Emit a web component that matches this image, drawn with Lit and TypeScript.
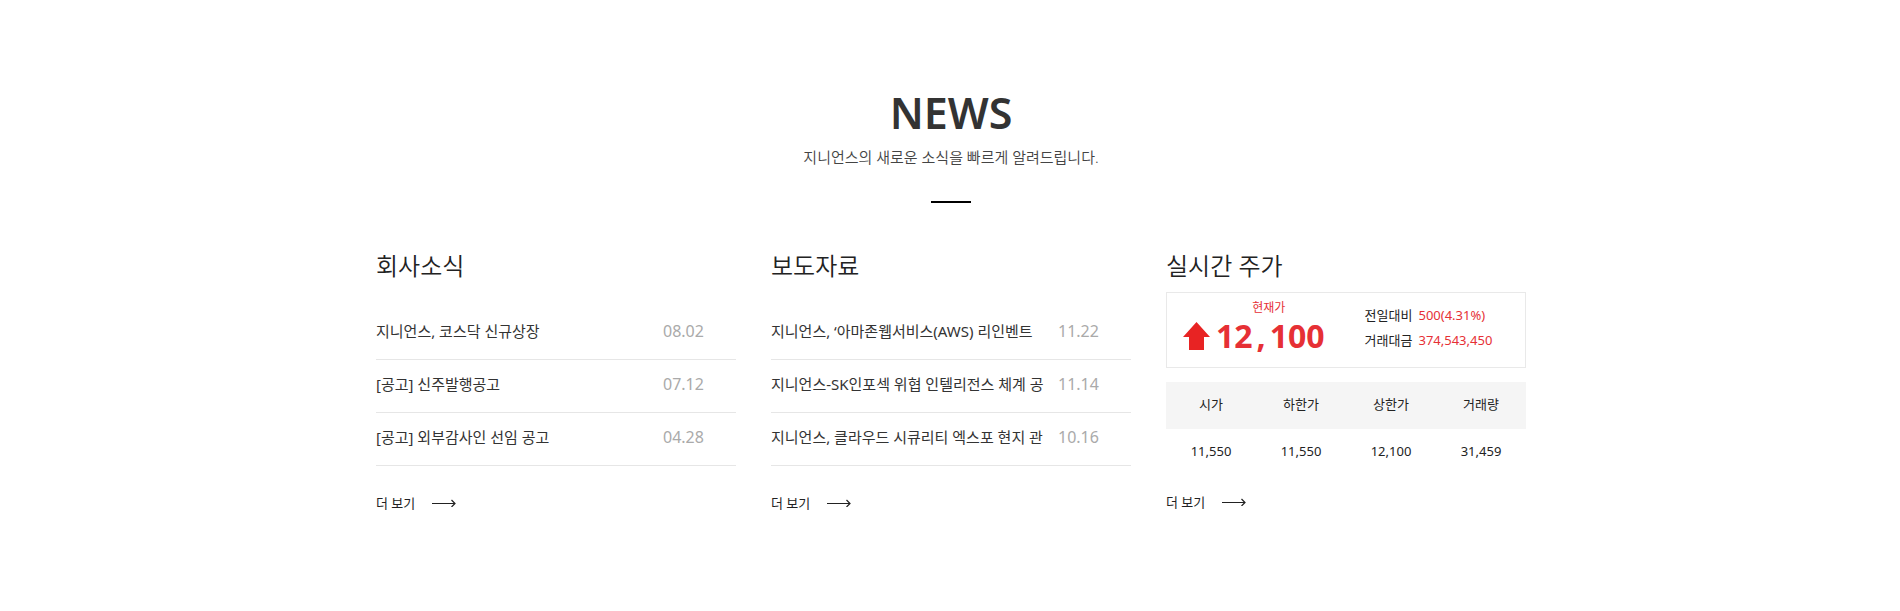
import { LitElement, html, css } from "lit";
import { customElement, property } from "lit/decorators.js";

interface NewsItem {
  title: string;
  date: string;
}

const companyNews: NewsItem[] = [
  { title: "지니언스, 코스닥 신규상장", date: "08.02" },
  { title: "[공고] 신주발행공고", date: "07.12" },
  { title: "[공고] 외부감사인 선임 공고", date: "04.28" },
];

const pressNews: NewsItem[] = [
  { title: "지니언스, ‘아마존웹서비스(AWS) 리인벤트", date: "11.22" },
  { title: "지니언스-SK인포섹 위협 인텔리전스 체계 공", date: "11.14" },
  { title: "지니언스, 클라우드 시큐리티 엑스포 현지 관", date: "10.16" },
];

const quotes = [
  { label: "시가", value: "11,550" },
  { label: "하한가", value: "11,550" },
  { label: "상한가", value: "12,100" },
  { label: "거래량", value: "31,459" },
];

@customElement("more-link")
export class MoreLink extends LitElement {
  static styles = css`
    :host {
      display: flex;
    }
    .more {
      display: flex;
      align-items: center;
      gap: 17px;
      color: #222;
      font-size: 13px;
      line-height: 20px;
      text-decoration: none;
    }
    .arrow {
      display: block;
    }
  `;

  render() {
    return html`<a class="more" href="#">
      더 보기
      <svg class="arrow" width="24" height="8" viewBox="0 0 24 8" fill="none" stroke="#222" aria-hidden="true">
        <path d="M0 4.5H23M19.5 1L23 4.5L19.5 8" stroke-width="1.2" />
      </svg>
    </a>`;
  }
}

@customElement("news-list")
export class NewsList extends LitElement {
  @property() heading = "";
  @property({ attribute: false }) items: NewsItem[] = [];

  static styles = css`
    :host {
      display: block;
    }
    .heading {
      margin: 0;
      font-size: 24px;
      font-weight: 350;
      line-height: 38px;
      color: #222;
    }
    .list {
      margin: 22px 0 27px;
      padding: 0;
      list-style: none;
    }
    .item {
      border-bottom: 1px solid #e6e6e6;
    }
    .link {
      display: grid;
      grid-template-columns: minmax(0, 1fr) 73px;
      column-gap: 7px;
      line-height: 24px;
      padding: 12px 0 16px;
      text-decoration: none;
      color: #333;
    }
    .title {
      overflow: hidden;
      white-space: nowrap;
      font-size: 15px;
    }
    .date {
      font-size: 16px;
      color: #aaa;
    }
  `;

  render() {
    return html`
      <h3 class="heading">${this.heading}</h3>
      <ul class="list">
        ${this.items.map(
          (item) => html`<li class="item">
            <a class="link" href="#"
              ><span class="title">${item.title}</span><time class="date">${item.date}</time></a
            >
          </li>`
        )}
      </ul>
      <more-link></more-link>
    `;
  }
}

@customElement("stock-panel")
export class StockPanel extends LitElement {
  static styles = css`
    :host {
      display: block;
      color: #222;
    }
    .heading {
      margin: 0;
      font-size: 24px;
      font-weight: 350;
      line-height: 38px;
    }
    .summary {
      display: flex;
      align-items: center;
      box-sizing: border-box;
      height: 76px;
      margin: 7px 0 14px;
      padding: 0 16px 4px;
      border: 1px solid #e9e9e9;
    }
    .current {
      display: grid;
      grid-template-columns: 27px auto;
      column-gap: 6px;
      align-items: center;
      margin-right: 40px;
      color: #e63035;
    }
    .caption {
      grid-column: 1 / -1;
      justify-self: center;
      padding-left: 30px;
      font-size: 12px;
      line-height: 16px;
    }
    .price {
      display: flex;
      gap: 4px;
      font-family: "Open Sans", "Noto Sans", sans-serif;
      font-size: 32px;
      font-weight: 700;
      line-height: 40px;
    }
    .details {
      display: grid;
      grid-template-columns: auto auto;
      column-gap: 6px;
      margin: 0;
      font-size: 13px;
      line-height: 25px;
    }
    .amount {
      margin: 0;
      color: #e63035;
    }
    .quotes {
      width: 100%;
      margin-bottom: 16px;
      border-collapse: collapse;
      table-layout: fixed;
      font-size: 13px;
      line-height: 20px;
      text-align: center;
    }
    .label {
      padding: 12px 0 15px;
      background: #f5f5f5;
      font-weight: 400;
    }
    .value {
      padding: 12px 0 15px;
    }
  `;

  render() {
    return html`
      <h3 class="heading">실시간 주가</h3>
      <div class="summary">
        <div class="current">
          <span class="caption">현재가</span>
          <svg width="27" height="28" viewBox="0 0 27 28" fill="#e82323" aria-hidden="true">
            <path d="M13.5 0L27 15H21V28H6V15H0Z" />
          </svg>
          <strong class="price"><span>12</span><span>,</span><span>100</span></strong>
        </div>
        <dl class="details">
          <dt>전일대비</dt>
          <dd class="amount">500(4.31%)</dd>
          <dt>거래대금</dt>
          <dd class="amount">374,543,450</dd>
        </dl>
      </div>
      <table class="quotes">
        <thead>
          <tr>
            ${quotes.map((q) => html`<th class="label" scope="col">${q.label}</th>`)}
          </tr>
        </thead>
        <tbody>
          <tr>
            ${quotes.map((q) => html`<td class="value">${q.value}</td>`)}
          </tr>
        </tbody>
      </table>
      <more-link></more-link>
    `;
  }
}

@customElement("app-root")
export class AppRoot extends LitElement {
  static styles = css`
    :host {
      display: block;
      background: #fff;
      font-family: "Noto Sans", "Noto Sans CJK KR", sans-serif;
      font-weight: 400;
    }
    .news {
      box-sizing: border-box;
      max-width: 1152px;
      margin: 0 auto;
      padding: 83px 0 80px 2px;
    }
    .intro {
      text-align: center;
    }
    .title {
      margin: 0;
      font-family: "Noto Sans", sans-serif;
      font-size: 43px;
      font-weight: 600;
      line-height: 60px;
      color: #333;
    }
    .subtitle {
      margin: 0;
      font-size: 15px;
      font-weight: 350;
      line-height: 28px;
      color: #444;
    }
    .rule {
      width: 40px;
      height: 2px;
      margin: 30px auto 44px;
      border: 0;
      background: #000;
    }
    .columns {
      display: grid;
      grid-template-columns: repeat(3, minmax(0, 1fr));
      column-gap: 35px;
    }
  `;

  render() {
    return html`
      <section class="news">
        <header class="intro">
          <h2 class="title">NEWS</h2>
          <p class="subtitle">지니언스의 새로운 소식을 빠르게 알려드립니다.</p>
          <hr class="rule" />
        </header>
        <div class="columns">
          <news-list heading="회사소식" .items=${companyNews}></news-list>
          <news-list heading="보도자료" .items=${pressNews}></news-list>
          <stock-panel></stock-panel>
        </div>
      </section>
    `;
  }
}
